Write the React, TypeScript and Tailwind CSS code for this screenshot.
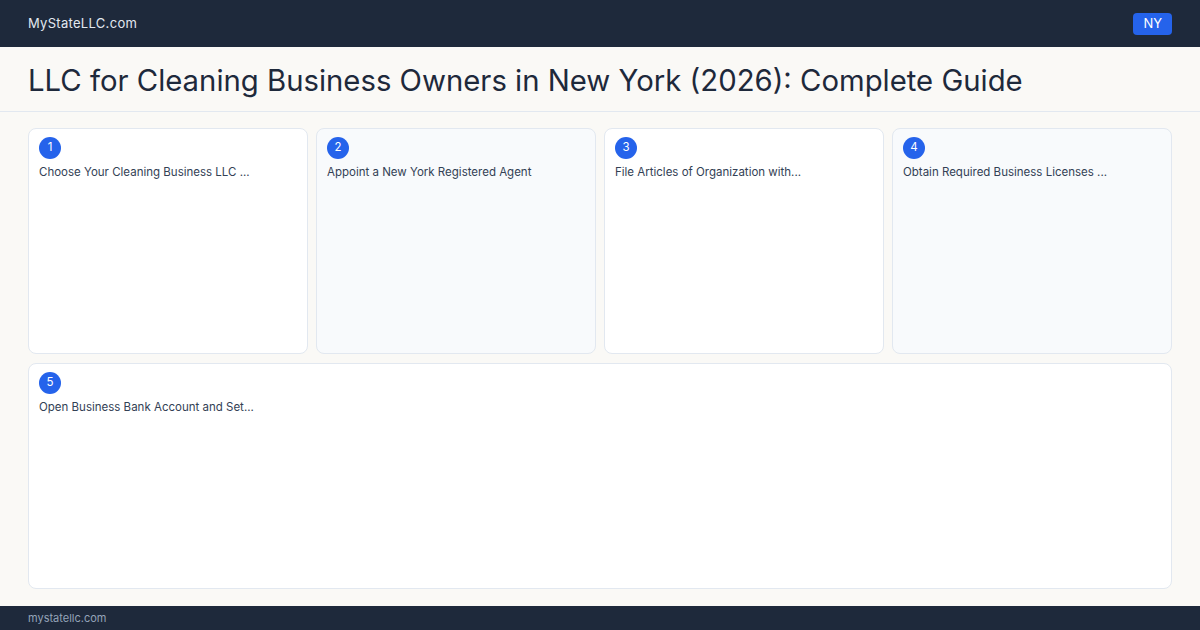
const steps = [
  { n: 1, title: "Choose Your Cleaning Business LLC ..." },
  { n: 2, title: "Appoint a New York Registered Agent" },
  { n: 3, title: "File Articles of Organization with..." },
  { n: 4, title: "Obtain Required Business Licenses ..." },
];

function StepCard({ n, title, alt, wide }: { n: number; title: string; alt?: boolean; wide?: boolean }) {
  return (
    <div
      className={`rounded-lg border border-[#e2e8f0] px-[10px] pt-[8px] ${alt ? "bg-[#f8fafc]" : "bg-white"} ${wide ? "col-span-4" : ""}`}
    >
      <div className="w-[22px] h-[22px] rounded-full bg-[#2563eb] text-white text-[11.5px] flex items-center justify-center">
        {n}
      </div>
      <div className="mt-[5px] text-[11.5px] leading-[16px] text-[#334155]">{title}</div>
    </div>
  );
}

export default function App() {
  return (
    <div className="w-[1200px] h-[630px] flex flex-col bg-[#faf9f6] font-['Inter',sans-serif] overflow-hidden">
      <header className="h-[47px] bg-[#1e293b] flex items-center justify-between px-[28px]">
        <span className="text-[13px] text-[#e2e8f0] tracking-[0.3px]">MyStateLLC.com</span>
        <span className="bg-[#2563eb] text-white text-[13px] rounded-[4px] px-[10px] h-[22px] flex items-center">NY</span>
      </header>
      <div className="h-[65px] flex items-center px-[28px] pt-[3px] border-b border-[#e2e8f0]">
        <h1 className="text-[29.3px] text-[#1e293b] leading-none">
          LLC for Cleaning Business Owners in New York (2026): Complete Guide
        </h1>
      </div>
      <main className="flex-1 px-[28px] pt-[16px] pb-[17px] grid grid-cols-4 grid-rows-2 gap-x-[8px] gap-y-[9px]">
        {steps.map((s, i) => (
          <StepCard key={s.n} n={s.n} title={s.title} alt={i % 2 === 1} />
        ))}
        <StepCard n={5} title="Open Business Bank Account and Set..." wide />
      </main>
      <footer className="h-[24px] bg-[#1e293b] flex items-center px-[28px]">
        <span className="text-[11px] text-[#94a3b8]">mystatellc.com</span>
      </footer>
    </div>
  );
}
